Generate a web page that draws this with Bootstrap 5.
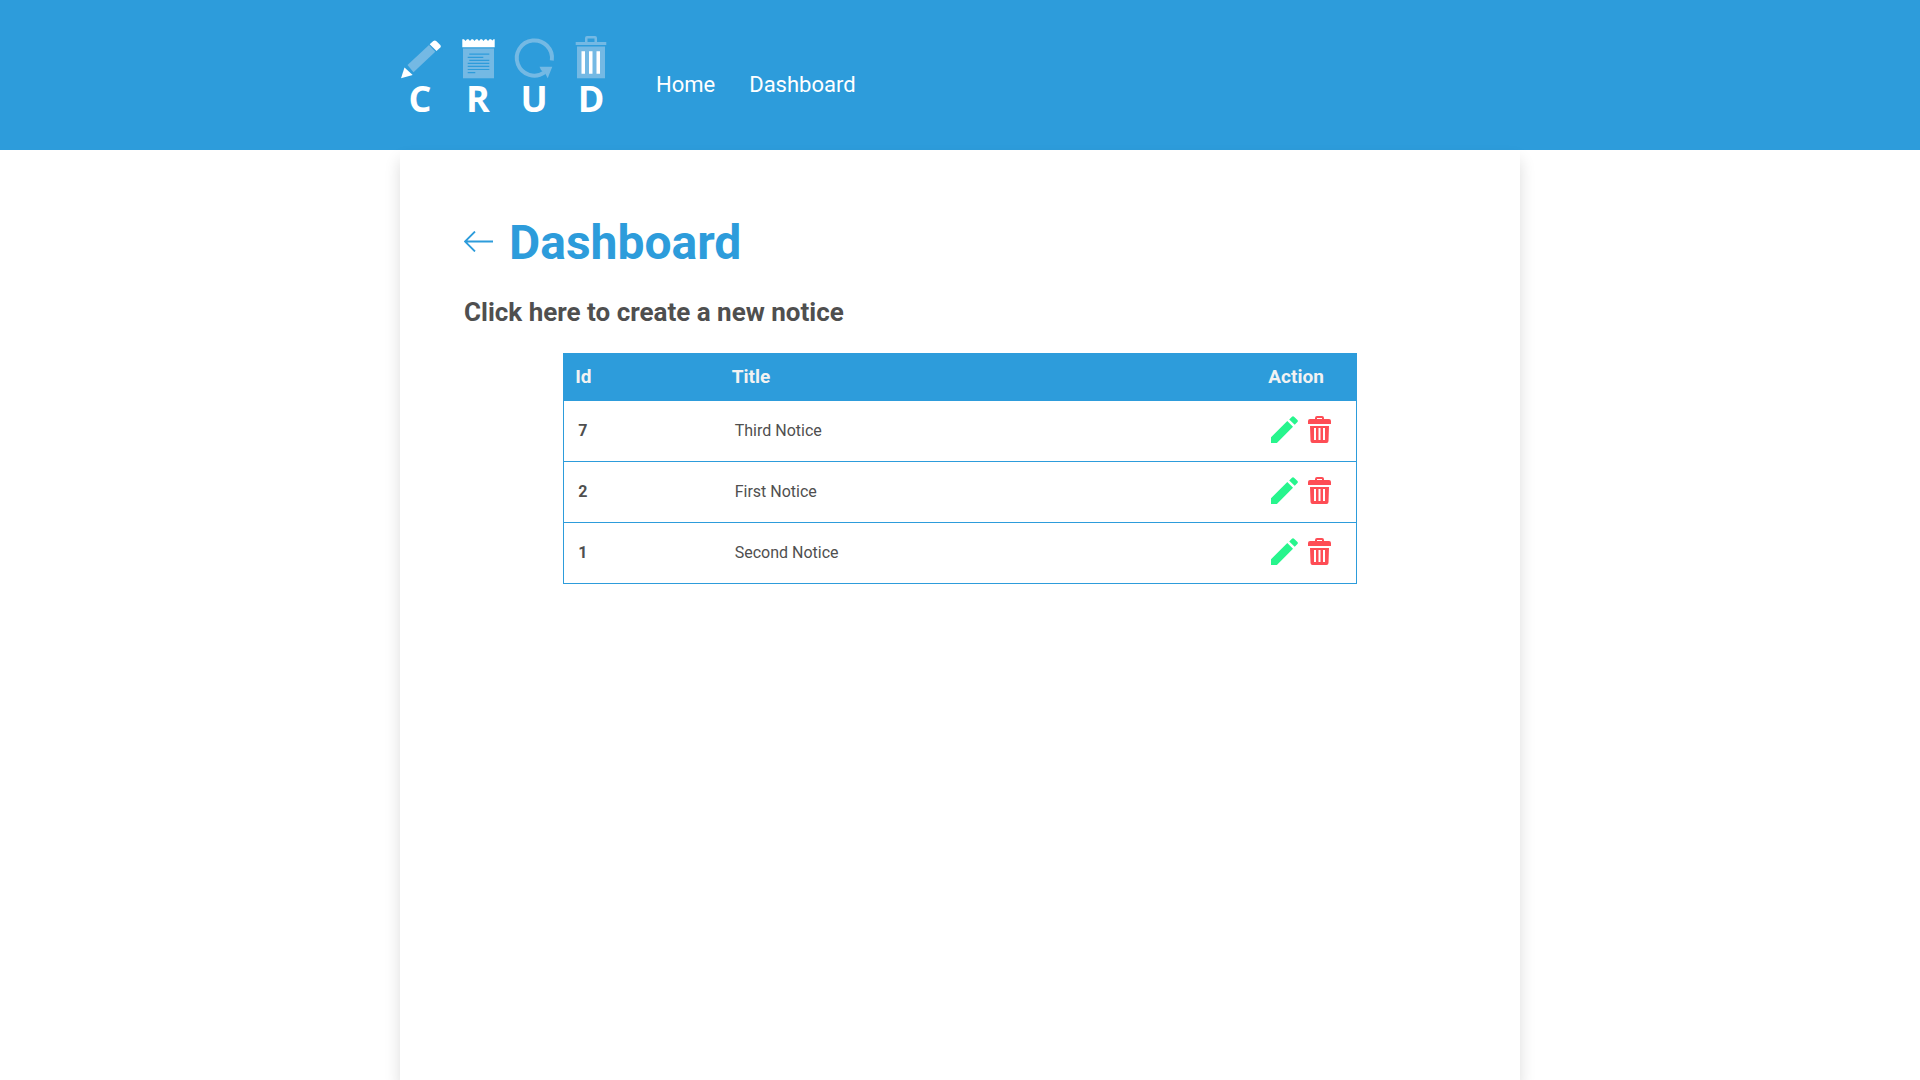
<!DOCTYPE html>
<html lang="en">
<head>
<meta charset="utf-8">
<meta name="viewport" content="width=device-width, initial-scale=1">
<title>Dashboard</title>
<link href="https://cdn.jsdelivr.net/npm/bootstrap@5.3.0/dist/css/bootstrap.min.css" rel="stylesheet">
<style>
  :root { --brand: #2d9cdb; --ink: #4f4f4f; }
  body { font-family: Roboto, sans-serif; color: var(--ink); }
  .wrap { width: 100%; max-width: 1120px; margin: 0 auto; }
  .topbar { background: var(--brand); min-height: 150px; }
  .topbar .nav-link { color: #fff; font-size: 22px; line-height: 32px; padding: 0; }
  .topbar .navbar-nav { gap: 34px; margin-left: 46px; padding-top: 20px; }
  .logo-letters { font: bold 36px "Open Sans", sans-serif; fill: #fff; text-anchor: middle; }
  .panel { padding: 64px; box-shadow: 0 10px 15px rgba(0, 0, 0, .14); }
  .page-title { color: var(--brand); font-size: 48px; line-height: 58px; font-weight: 700; }
  .create-heading { margin: 23px 0 24px; }
  .create-link { color: var(--ink); font-size: 26px; line-height: 34px; font-weight: 700; }
  .notices { width: 80%; table-layout: fixed; border: 1px solid var(--brand); }
  .notices thead th { background: var(--brand); color: #f2f2f2; font-size: 19px; line-height: 22px; padding: 12px 11px; }
  .notices tbody tr { border-top: 1px solid var(--brand); }
  .notices tbody th, .notices tbody td { font-size: 16px; line-height: 24px; height: 61px; padding: 0 14px; vertical-align: middle; }
  .notices .col-id { width: 157px; }
  .notices .col-action { width: 99px; }
  .row-actions { gap: 10px; }
  .icon-btn { border: 0; background: none; padding: 0; display: flex; }
</style>
<script src="https://cdn.jsdelivr.net/npm/bootstrap@5.3.0/dist/js/bootstrap.bundle.min.js"></script>
</head>
<body class="d-flex flex-column min-vh-100">
<svg class="d-none" aria-hidden="true">
  <symbol id="pencil" viewBox="0 0 27 27">
    <path fill="#27f58d" d="M0 27V21.2L16.3 5 22 10.7 5.9 27ZM18.2 3.4 20.7.9Q22-.4 23.3.9L26.2 3.8Q27.5 5 26.2 6.300L23.700 8.800Z"/>
  </symbol>
  <symbol id="trash" viewBox="0 0 23 27">
    <path fill="#fe4d55" fill-rule="evenodd" d="M7 3V2Q7 0 9 0H14Q16 0 16 2V3H21Q23 3 23 5V8H0V5Q0 3 2 3ZM9 3H14V2H9ZM2 10H21L20.500 25Q20.400 27 18.500 27H4.500Q2.600 27 2.500 25ZM6 12V24H8V12ZM10.500 12V24H12.500V12ZM15 12V24H17V12Z"/>
  </symbol>
</svg>

<header class="topbar d-flex align-items-center">
  <div class="wrap d-flex align-items-center">
    <a href="#" aria-label="CRUD home" class="d-flex">
      <svg width="210" height="98" viewBox="0 -8 210 98">
        <g fill="#74b9e4">
          <path d="M7.500 31 29 11 35.300 17.800 13.500 38.200Z"/>
          <path d="M63 14.500H94V44.300H63Z"/>
          <path d="M139.500 32.700H152.300L147.700 44.300 145.500 40 141 36Z"/>
          <path fill-rule="evenodd" d="M175.700 8H185V4Q185 2 187 2H195Q197 2 197 4V8H206.300V11H175.700ZM187.500 8H194.500V4.500H187.500Z"/>
          <path d="M177 12.500H205V44.300H177Z"/>
        </g>
        <path d="M151.800 26.500A17.600 17.600 0 1 0 144.500 38.400" fill="none" stroke="#74b9e4" stroke-width="4"/>
        <g fill="#fff">
          <path d="M1 44.300 4.500 33.500 12.700 41Z"/>
          <path d="M29.700 10.300 33.300 7Q34.800 5.800 36.200 7L40.300 11Q41.500 12.200 40.300 13.500L36.500 16.900Z"/>
          <path d="M62.300 13.300V5.300H64L65.500 7 67 5.300H68.500L70 7 71.500 5.300H73L74.500 7 76 5.300H77.500L79 7 80.500 5.300H82L83.500 7 85 5.300H86.500L88 7 89.500 5.300H91L92.500 6.500 93.500 5.300H94.700V13.300Z"/>
          <path d="M181.500 17.300H185V39.700H181.500ZM189 17.300H192.500V39.700H189ZM196.500 17.300H200V39.700H196.500Z"/>
        </g>
        <path d="M69.300 20.200H89.300M67.700 23.400H83.300M69.300 26.400H89.300M67.700 29.400H89.300M67.700 32.400H89.300M67.700 35.500H89.300M67.700 38.600H75.300" stroke="#2d9cdb" stroke-width="1.200"/>
        <g class="logo-letters"><text x="20" y="78">C</text><text x="78" y="78">R</text><text x="134" y="78">U</text><text x="191" y="78">D</text></g>
      </svg>
    </a>
    <nav>
      <ul class="navbar-nav flex-row">
        <li class="nav-item"><a class="nav-link" href="#">Home</a></li>
        <li class="nav-item"><a class="nav-link" href="#">Dashboard</a></li>
      </ul>
    </nav>
  </div>
</header>

<main class="wrap panel flex-grow-1">
  <div class="d-flex align-items-center gap-3">
    <a href="#" aria-label="Back" class="d-flex pb-1">
      <svg width="29" height="21" viewBox="0 0 29 21" fill="none" stroke="#2d9cdb" stroke-width="1.800"><path d="M11 .5 1 10.500 11 20.500M1 10.500H29"/></svg>
    </a>
    <h1 class="page-title mb-0">Dashboard</h1>
  </div>
  <h2 class="create-heading"><a href="#" class="create-link text-decoration-none d-block">Click here to create a new notice</a></h2>
  <table class="notices mx-auto">
    <thead>
      <tr><th scope="col" class="col-id">Id</th><th scope="col">Title</th><th scope="col" class="col-action">Action</th></tr>
    </thead>
    <tbody>
      <tr>
        <th scope="row">7</th><td>Third Notice</td>
        <td><div class="row-actions d-flex pb-1"><button type="button" class="icon-btn" aria-label="Edit notice 7"><svg width="27" height="27"><use href="#pencil"/></svg></button><button type="button" class="icon-btn" aria-label="Delete notice 7"><svg width="23" height="27"><use href="#trash"/></svg></button></div></td>
      </tr>
      <tr>
        <th scope="row">2</th><td>First Notice</td>
        <td><div class="row-actions d-flex pb-1"><button type="button" class="icon-btn" aria-label="Edit notice 2"><svg width="27" height="27"><use href="#pencil"/></svg></button><button type="button" class="icon-btn" aria-label="Delete notice 2"><svg width="23" height="27"><use href="#trash"/></svg></button></div></td>
      </tr>
      <tr>
        <th scope="row">1</th><td>Second Notice</td>
        <td><div class="row-actions d-flex pb-1"><button type="button" class="icon-btn" aria-label="Edit notice 1"><svg width="27" height="27"><use href="#pencil"/></svg></button><button type="button" class="icon-btn" aria-label="Delete notice 1"><svg width="23" height="27"><use href="#trash"/></svg></button></div></td>
      </tr>
    </tbody>
  </table>
</main>
</body>
</html>
